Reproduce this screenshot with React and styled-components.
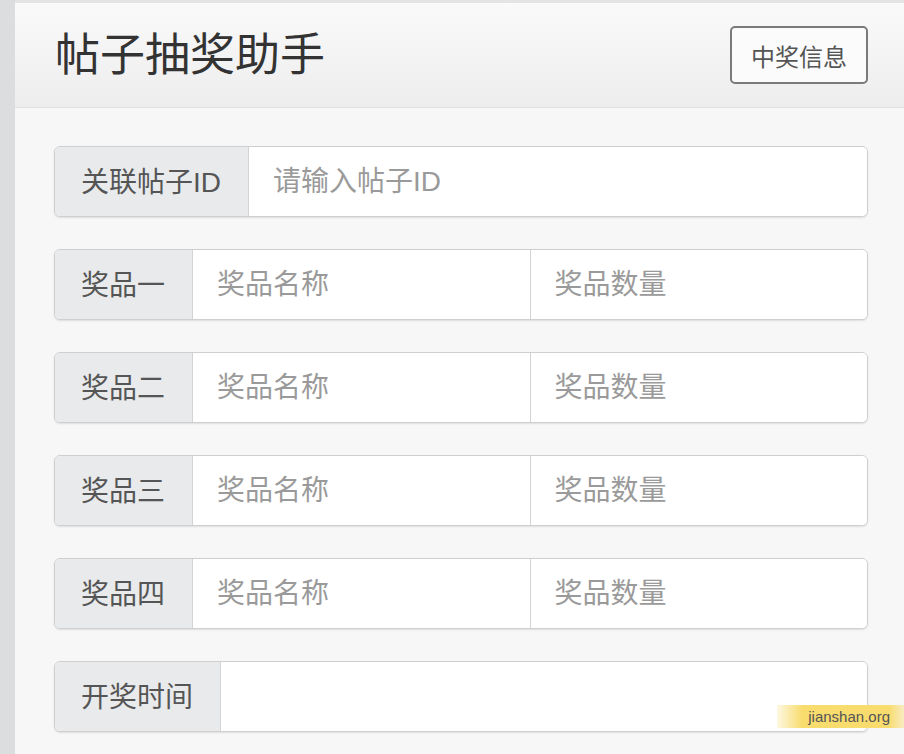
import styled, { createGlobalStyle } from "styled-components";

const GlobalStyle = createGlobalStyle`
  html, body {
    margin: 0;
    padding: 0;
    background: #f7f7f7;
    font-family: "Liberation Sans", "Noto Sans CJK SC", sans-serif;
  }
`;

const prizes = ["奖品一", "奖品二", "奖品三", "奖品四"];

const App = () => {
  return (
    <Page>
      <GlobalStyle />
      <Strip />
      <Main>
        <Header>
          <Title>帖子抽奖助手</Title>
          <InfoButton>中奖信息</InfoButton>
        </Header>
        <Body>
          <Group>
            <Addon>关联帖子ID</Addon>
            <Field placeholder="请输入帖子ID" />
          </Group>
          {prizes.map((name) => (
            <Group key={name}>
              <Addon>{name}</Addon>
              <Field placeholder="奖品名称" />
              <Field placeholder="奖品数量" divided />
            </Group>
          ))}
          <Group>
            <Addon>开奖时间</Addon>
            <Field />
          </Group>
        </Body>
      </Main>
      <Watermark>jianshan.org</Watermark>
    </Page>
  );
};

const Page = styled.div`
  position: relative;
  display: flex;
  width: 904px;
  height: 754px;
  overflow: hidden;
  background: #f7f7f7;
`;

const Strip = styled.div`
  width: 15px;
  flex-shrink: 0;
  background: #dcdddf;
`;

const Main = styled.div`
  flex: 1;
  min-width: 0;
  display: flex;
  flex-direction: column;
`;

const Header = styled.div`
  height: 104px;
  border-top: 3px solid #e4e4e6;
  border-bottom: 1px solid #e2e2e2;
  background: linear-gradient(to bottom, #fafafa, #ededee);
  display: flex;
  align-items: center;
  justify-content: space-between;
  padding: 0 36px 0 40px;
`;

const Title = styled.h1`
  margin: 0;
  font-size: 45px;
  font-weight: 400;
  color: #333;
  line-height: 1;
`;

const InfoButton = styled.button`
  width: 138px;
  height: 58px;
  border: 2px solid #7a7a7a;
  border-radius: 5px;
  background: #fbfbfb;
  color: #555;
  font-family: inherit;
  font-size: 24px;
  padding: 0;
`;

const Body = styled.div`
  display: flex;
  flex-direction: column;
  gap: 32px;
  padding: 38px 36px 0 39px;
`;

const Group = styled.div`
  display: flex;
  height: 71px;
  box-sizing: border-box;
  border: 1px solid #cfcfcf;
  border-radius: 6px;
  box-shadow: 0 1px 2px rgba(0, 0, 0, 0.1);
  overflow: hidden;
  background: #fff;
`;

const Addon = styled.div`
  display: flex;
  align-items: center;
  padding: 0 27px 3px 26px;
  background: #e9eaec;
  border-right: 1px solid #d3d3d3;
  color: #555;
  font-size: 28px;
  white-space: nowrap;
`;

const Field = styled.input`
  flex: 1;
  width: 0;
  min-width: 0;
  border: none;
  border-left: ${({ divided }) => (divided ? "1px solid #d3d3d3" : "none")};
  outline: none;
  padding: 0 24px;
  font-family: inherit;
  font-size: 28px;
  color: #333;
  background: #fff;
  &::placeholder {
    color: #9a9a9a;
  }
`;

const Watermark = styled.div`
  position: absolute;
  right: 0;
  top: 705px;
  width: 127px;
  height: 23px;
  display: flex;
  align-items: center;
  justify-content: flex-end;
  padding-right: 14px;
  box-sizing: border-box;
  background: linear-gradient(to right, rgba(249, 220, 110, 0.2), #f8dc6e 20%, #f8dc6e 88%, rgba(249, 220, 110, 0.4));
  color: #555;
  font-family: "Liberation Sans", Arial, sans-serif;
  font-size: 15px;
`;

export default App;
